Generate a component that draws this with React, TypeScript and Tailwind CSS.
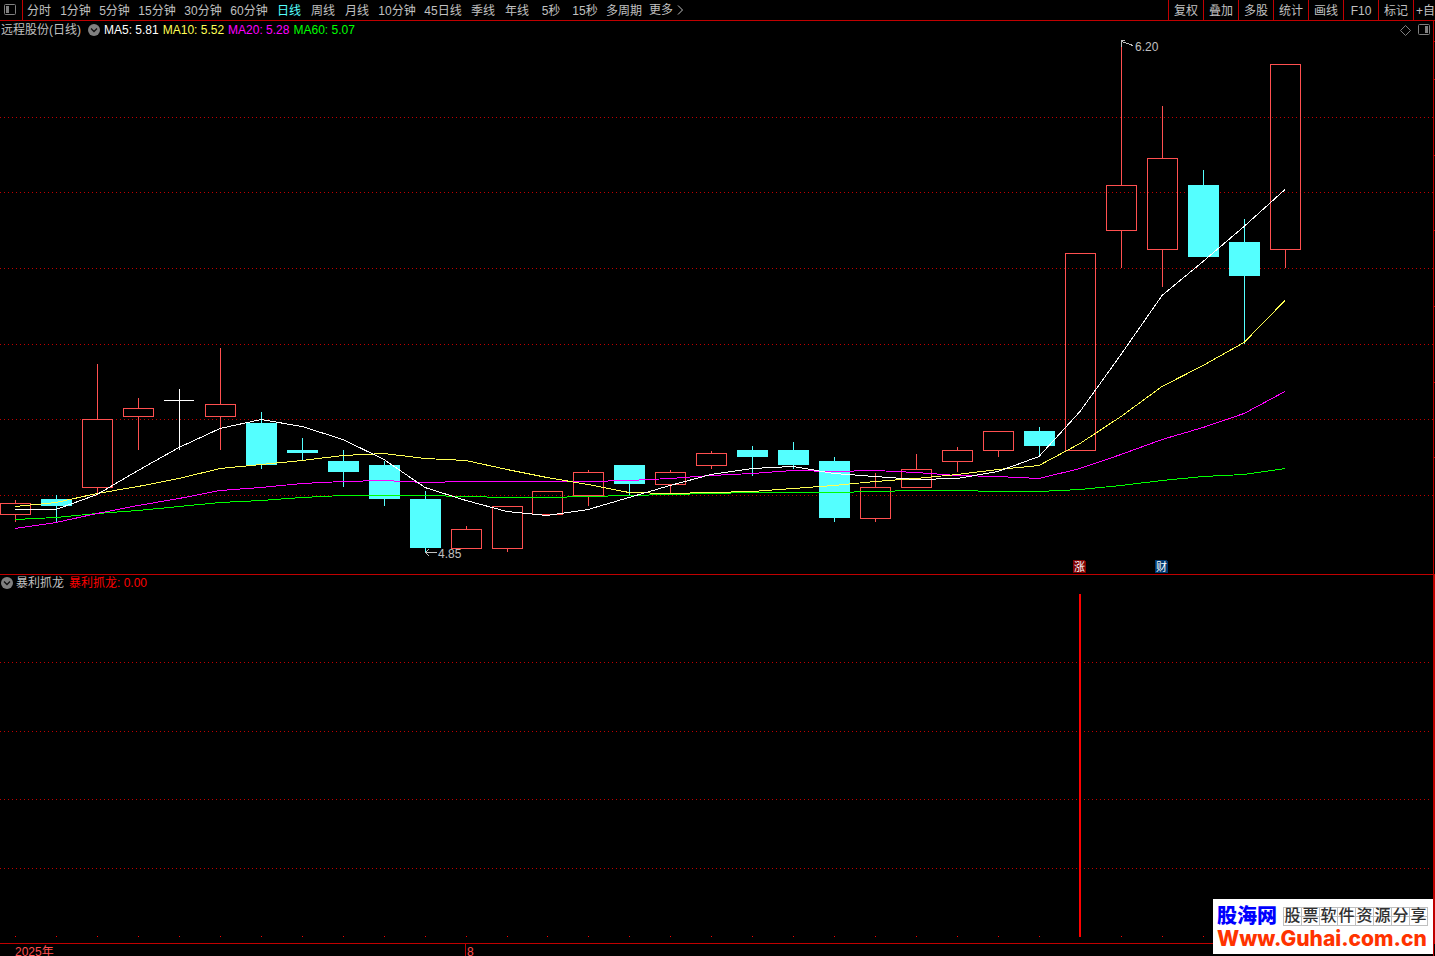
import { useState } from 'react';
import { clsx, type ClassValue } from 'clsx';
import { twMerge } from 'tailwind-merge';

export function cn(...inputs: ClassValue[]) {
  return twMerge(clsx(inputs));
}

const PERIODS = [
  { label: '分时', width: 'w-[34px]' },
  { label: '1分钟', width: 'w-[39px]' },
  { label: '5分钟', width: 'w-[39px]' },
  { label: '15分钟', width: 'w-[46px]' },
  { label: '30分钟', width: 'w-[46px]' },
  { label: '60分钟', width: 'w-[46px]' },
  { label: '日线', width: 'w-[34px]' },
  { label: '周线', width: 'w-[34px]' },
  { label: '月线', width: 'w-[34px]' },
  { label: '10分钟', width: 'w-[46px]' },
  { label: '45日线', width: 'w-[46px]' },
  { label: '季线', width: 'w-[34px]' },
  { label: '年线', width: 'w-[34px]' },
  { label: '5秒', width: 'w-[34px]' },
  { label: '15秒', width: 'w-[34px]' },
  { label: '多周期', width: 'w-[44px]' },
];

const TOOLS = ['复权', '叠加', '多股', '统计', '画线', 'F10', '标记'];

const AVERAGES = [
  { label: 'MA5: 5.81', color: 'text-white' },
  { label: 'MA10: 5.52', color: 'text-[#ffff54]' },
  { label: 'MA20: 5.28', color: 'text-[#ff00ff]' },
  { label: 'MA60: 5.07', color: 'text-[#00ff00]' },
];

type Candle = { kind: 'up' | 'down' | 'flat'; top: number; bottom: number; high: number; low: number };

const candle = (kind: Candle['kind'], top: number, bottom: number, high = top, low = bottom): Candle => ({ kind, top, bottom, high, low });

const CANDLES: Candle[] = [
  candle('up', 503, 515, 500, 522),
  candle('down', 499, 506, 495, 522),
  candle('up', 419, 488, 364, 494),
  candle('up', 408, 417, 398, 450),
  candle('flat', 400, 401, 389, 450),
  candle('up', 404, 417, 348, 450),
  candle('down', 423, 465, 412, 469),
  candle('down', 450, 453, 438, 460),
  candle('down', 461, 472, 450, 487),
  candle('down', 465, 499, 461, 506),
  candle('down', 499, 548, 491, 553),
  candle('up', 529, 549, 526),
  candle('up', 506, 549, 506, 552),
  candle('up', 491, 515),
  candle('up', 472, 496, 470, 506),
  candle('down', 465, 484, 465, 495),
  candle('up', 472, 485, 470, 493),
  candle('up', 453, 466, 451, 469),
  candle('down', 450, 457, 446, 476),
  candle('down', 450, 465, 442, 469),
  candle('down', 461, 518, 457, 522),
  candle('up', 487, 519, 473, 522),
  candle('up', 469, 488, 454),
  candle('up', 450, 462, 447, 472),
  candle('up', 431, 451, 431, 457),
  candle('down', 431, 446, 427, 457),
  candle('up', 253, 451),
  candle('up', 185, 231, 41, 268),
  candle('up', 158, 250, 106, 287),
  candle('down', 185, 257, 170),
  candle('down', 242, 276, 219, 344),
  candle('up', 64, 250, 64, 268),
];

const LINES = [
  { color: '#00ff00', ys: [519, 517, 513, 510, 506, 502, 500, 497, 495, 495, 495, 496, 497, 497, 496, 495, 494, 493, 492, 492, 492, 491, 490, 490, 491, 491, 489, 485, 480, 476, 474, 468] },
  { color: '#ff00ff', ys: [528, 522, 513, 505, 498, 490, 487, 483, 481, 480, 482, 481, 481, 481, 481, 480, 478, 475, 473, 470, 471, 470, 472, 475, 476, 478, 468, 454, 439, 427, 413, 391] },
  { color: '#ffff54', ys: [506, 502, 493, 486, 478, 468, 464, 460, 455, 453, 458, 460, 469, 477, 484, 492, 493, 492, 491, 488, 485, 481, 478, 474, 469, 465, 443, 416, 386, 365, 342, 300] },
  { color: '#ffffff', ys: [509, 509, 494, 470, 447, 428, 419, 426, 439, 459, 487, 500, 511, 515, 509, 497, 485, 474, 468, 466, 473, 476, 479, 478, 471, 456, 411, 354, 295, 261, 226, 189] },
];

const MAIN_GRID = [117, 192, 268, 344, 419, 495];
const MAIN_TICKS = [41, 79, 155, 230, 306, 382, 457];
const SUB_GRID = [662, 731, 799, 868];

const candleX = (i: number) => Math.round(15 + 40.96 * i);

function GridLine({ y, end }: { y: number, end: number }) {
  return <line x1={0} x2={end} y1={y + 0.5} y2={y + 0.5} stroke="#c00000" strokeDasharray="1 3" />;
}

function CandleShape({ data, x }: { data: Candle, x: number }) {
  const { kind, top, bottom, high, low } = data;
  const color = kind === 'up' ? '#ff5050' : kind === 'down' ? '#54ffff' : '#ffffff';
  return (
    <g fill={color}>
      {high < top && <rect x={x} y={high} width={1} height={top - high} />}
      {low > bottom && <rect x={x} y={bottom} width={1} height={low - bottom} />}
      {kind === 'up'
        ? <rect x={x - 14.5} y={top + 0.5} width={30} height={bottom - top - 1} fill="none" stroke={color} />
        : <rect x={x - 15} y={top} width={kind === 'flat' ? 30 : 31} height={bottom - top} />}
    </g>
  );
}

function EventBadge({ x, label, fill }: { x: number, label: string, fill: string }) {
  return (
    <g>
      <path d={`M${x} 560h11l2 2v11h-13z`} fill={fill} />
      <text x={x + 1} y={571} fontSize={11} fill="#ffffff">{label}</text>
    </g>
  );
}

function MainChart() {
  return (
    <svg viewBox="0 39 1435 535" className="block w-full h-auto" shapeRendering="crispEdges">
      {MAIN_GRID.map(y => <GridLine key={y} y={y} end={1433} />)}
      {CANDLES.map((c, i) => <CandleShape key={i} data={c} x={candleX(i)} />)}
      {LINES.map(({ color, ys }) => (
        <polyline
          key={color}
          fill="none"
          stroke={color}
          points={ys.map((y, i) => `${candleX(i)},${y + 0.5}`).join(' ')}
        />
      ))}

      {/* highest and lowest price of the range */}
      <path d="M1133 45.5L1121.5 41.5M1125 40.5h-3.5v6" fill="none" stroke="#c0c0c0" />
      <text x={1135} y={51} fontSize={12} fill="#c0c0c0">6.20</text>
      <path d="M437 552.5h-11.5M429 549l-3.5 3.5l3.5 3.5" fill="none" stroke="#c0c0c0" />
      <text x={438} y={558} fontSize={12} fill="#c0c0c0">4.85</text>

      <EventBadge x={1073} label="涨" fill="#800000" />
      <EventBadge x={1155} label="财" fill="#003870" />

      <rect x={1433} y={39} width={1} height={535} fill="#c00000" />
      {MAIN_TICKS.map(y => <rect key={y} x={1434} y={y} width={1} height={1} fill="#c00000" />)}
    </svg>
  );
}

function SignalChart() {
  return (
    <svg viewBox="0 591 1435 352" className="block w-full h-auto" shapeRendering="crispEdges">
      {SUB_GRID.map(y => <GridLine key={y} y={y} end={1430} />)}
      {CANDLES.map((_, i) => <rect key={i} x={candleX(i)} y={936} width={1} height={1} fill="#ff0000" />)}
      <rect x={1079} y={594} width={2} height={343} fill="#ff0000" />
      <rect x={1433} y={591} width={2} height={352} fill="#c00000" />
    </svg>
  );
}

function PanelIcon({ side }: { side: 'left' | 'right' }) {
  return (
    <svg width={12} height={12} viewBox="0 0 12 12">
      <rect x={0.5} y={0.5} width={11} height={10} rx={1} fill="none" stroke="#808080" />
      <rect x={side === 'left' ? 2 : 7} y={2} width={3} height={7} fill="#808080" />
    </svg>
  );
}

function MenuDot({ label }: { label: string }) {
  return (
    <button aria-label={label} className="shrink-0 cursor-pointer">
      <svg width={12} height={12} viewBox="0 0 12 12">
        <circle cx={6} cy={6} r={6} fill="#808080" />
        <path d="M3 4.5l3 3l3-3" fill="none" stroke="#101010" strokeWidth={1.3} />
      </svg>
    </button>
  );
}

function Watermark() {
  return (
    <a href="#guhai" className="absolute right-0.5 bottom-0.5 w-[220px] h-[55px] bg-white px-1 pt-[6px] overflow-hidden whitespace-nowrap">
      <span className="flex items-center h-[22px] gap-[6px]">
        <span className="text-[20px] leading-[22px] font-black text-[#0000ff]">股海网</span>
        <span className="relative flex border-l border-y border-[#c0c0c0]">
          <span className="absolute inset-x-0 top-2 border-t border-[#c0c0c0]" />
          {[...'股票软件资源分享'].map(ch => (
            <span key={ch} className="relative w-[18px] h-[17px] border-r border-[#c0c0c0] text-[16px] leading-[16px] font-medium text-center text-[#303030]">{ch}</span>
          ))}
        </span>
      </span>
      <span className="block font-['Inter','Liberation_Sans',sans-serif] text-[21px] leading-[23px] font-extrabold text-[#ff3300]">Www.Guhai.com.cn</span>
    </a>
  );
}

export default function App() {
  const [period, setPeriod] = useState('日线');

  return (
    <div className="relative w-full overflow-hidden bg-black text-[#c0c0c0] text-xs font-['Liberation_Sans','Noto_Sans_CJK_SC',sans-serif]">
      <header className="flex h-[21px] border-b border-[#c00000] overflow-hidden">
        <button aria-label="侧栏" className="w-[22px] pl-1 shrink-0 cursor-pointer">
          <PanelIcon side="left" />
        </button>
        <nav className="flex flex-1 min-w-0 overflow-hidden border-l border-[#c00000] whitespace-nowrap">
          {PERIODS.map(({ label, width }) => (
            <button
              key={label}
              onClick={() => setPeriod(label)}
              className={cn("shrink-0 pr-0.5 text-center leading-[22px] cursor-pointer", width, period === label && "text-[#54ffff]")}
            >
              {label}
            </button>
          ))}
          <button className="flex items-center shrink-0 gap-1 pl-0.5 leading-[22px] cursor-pointer">
            更多
            <svg width={7} height={10} viewBox="0 0 7 10">
              <path d="M1 0.5l4.5 4.5l-4.5 4.5" fill="none" stroke="#c0c0c0" />
            </svg>
          </button>
        </nav>
        <div className="flex shrink-0 whitespace-nowrap">
          {TOOLS.map(label => (
            <button key={label} className="w-[35px] border-l border-[#c00000] text-center leading-[22px] cursor-pointer">{label}</button>
          ))}
          <button className="w-[22px] border-l border-[#c00000] pl-0.5 text-left leading-[22px] overflow-hidden cursor-pointer">+自选</button>
        </div>
      </header>

      <section className="border-b border-[#c00000]">
        <div className="flex items-center h-[18px] mr-px pl-px pr-[3px] border-r border-[#c00000] leading-5 whitespace-nowrap">
          <h1 className="mr-[7px]">远程股份(日线)</h1>
          <MenuDot label="主图指标" />
          <div className="flex gap-1 ml-1">
            {AVERAGES.map(({ label, color }) => <span key={label} className={color}>{label}</span>)}
          </div>
          <div className="flex items-center gap-[7px] ml-auto">
            <button aria-label="标记点" className="cursor-pointer">
              <svg width={11} height={11} viewBox="0 0 11 11">
                <path d="M5.5 0.5l5 5l-5 5l-5-5z" fill="none" stroke="#808080" />
              </svg>
            </button>
            <button aria-label="右侧栏" className="cursor-pointer">
              <PanelIcon side="right" />
            </button>
          </div>
        </div>
        <MainChart />
      </section>

      <section className="border-b border-[#c00000]">
        <div className="flex items-center h-4 pl-px border-r-2 border-[#c00000] whitespace-nowrap">
          <MenuDot label="副图指标" />
          <h2 className="ml-[3px]">暴利抓龙</h2>
          <span className="ml-[5px] text-[#ff0000]">暴利抓龙: 0.00</span>
        </div>
        <SignalChart />
      </section>

      <footer className="flex h-3 mr-px border-r border-[#c00000] text-[#ff5050] leading-4 overflow-hidden">
        <span className="w-[465px] pl-[15px]">2025年</span>
        <span className="border-l border-[#c00000] pl-px">8</span>
      </footer>

      <Watermark />
    </div>
  );
}
